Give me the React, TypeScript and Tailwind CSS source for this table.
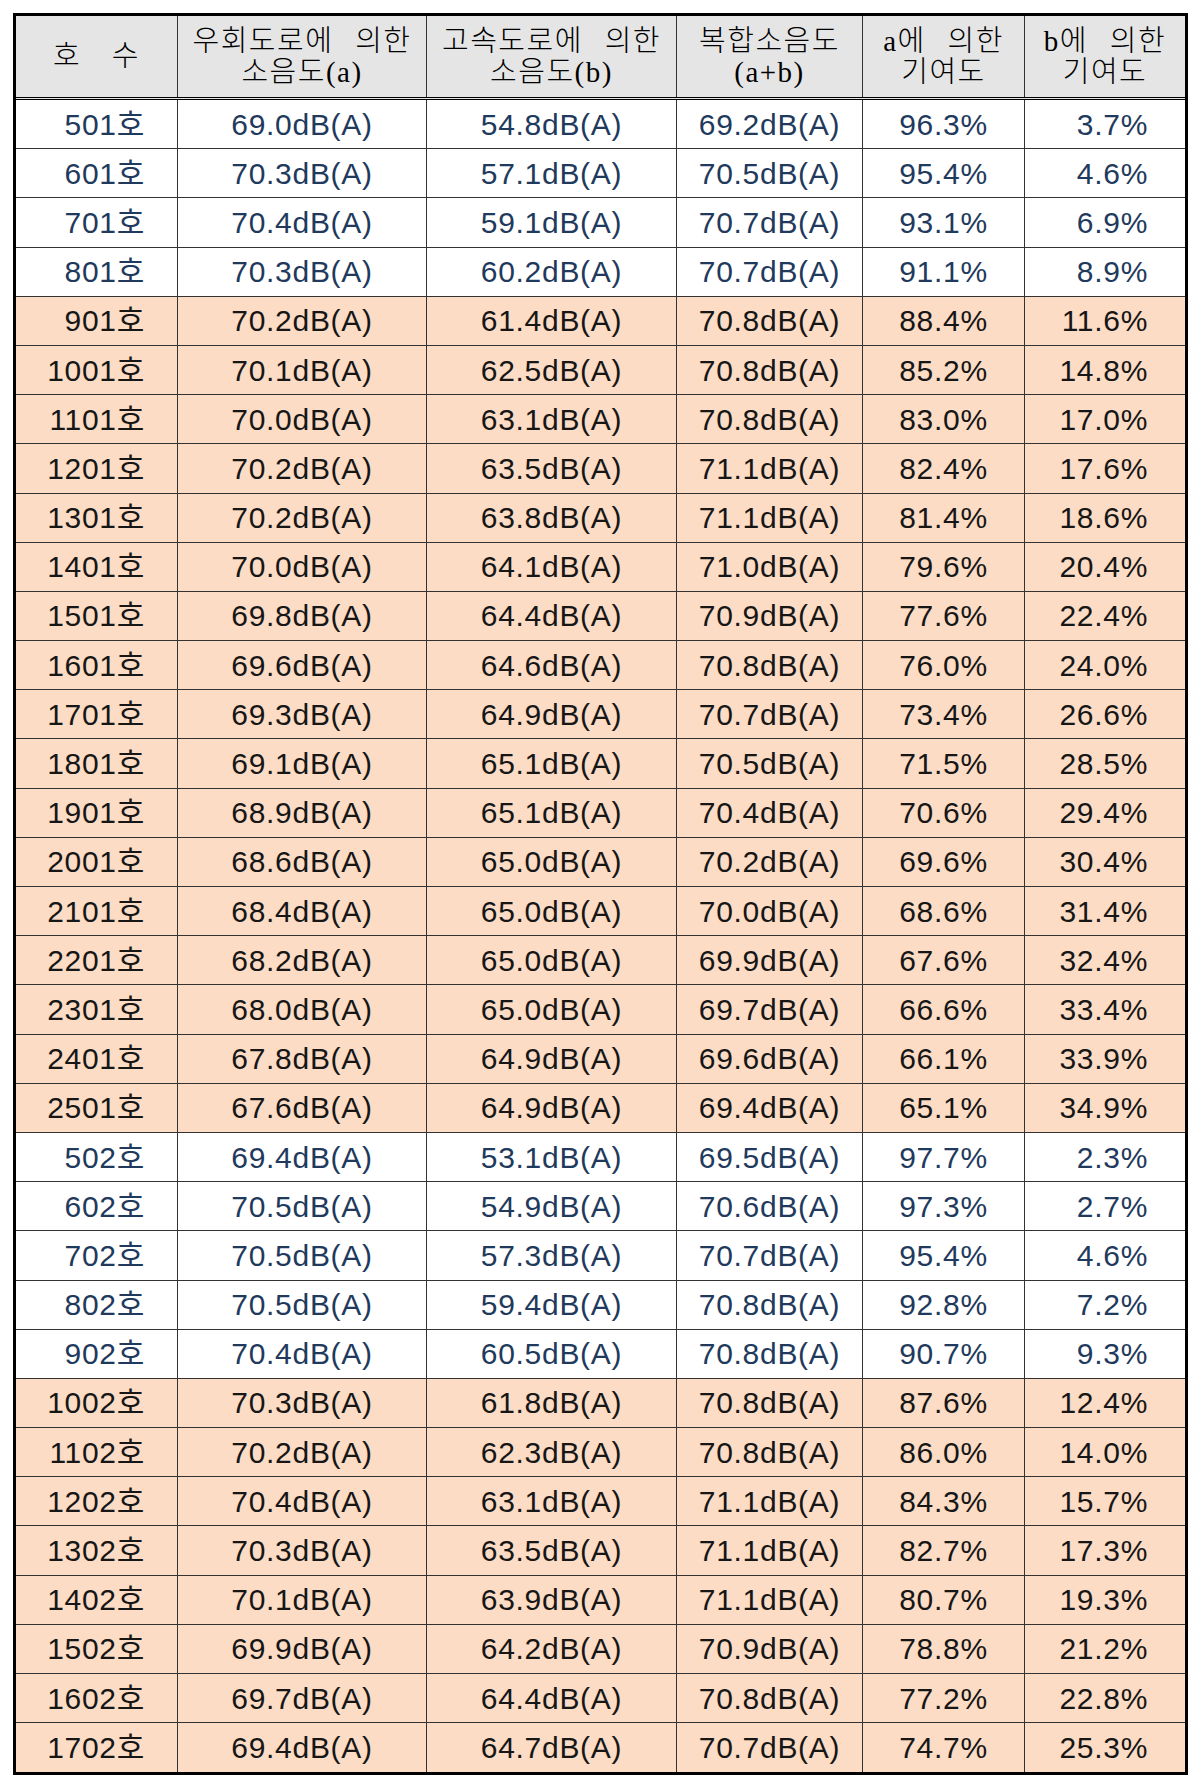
const rows: [string, string, string, string, string, string][] = [
  ["501호", "69.0", "54.8", "69.2", "96.3", "3.7"],
  ["601호", "70.3", "57.1", "70.5", "95.4", "4.6"],
  ["701호", "70.4", "59.1", "70.7", "93.1", "6.9"],
  ["801호", "70.3", "60.2", "70.7", "91.1", "8.9"],
  ["901호", "70.2", "61.4", "70.8", "88.4", "11.6"],
  ["1001호", "70.1", "62.5", "70.8", "85.2", "14.8"],
  ["1101호", "70.0", "63.1", "70.8", "83.0", "17.0"],
  ["1201호", "70.2", "63.5", "71.1", "82.4", "17.6"],
  ["1301호", "70.2", "63.8", "71.1", "81.4", "18.6"],
  ["1401호", "70.0", "64.1", "71.0", "79.6", "20.4"],
  ["1501호", "69.8", "64.4", "70.9", "77.6", "22.4"],
  ["1601호", "69.6", "64.6", "70.8", "76.0", "24.0"],
  ["1701호", "69.3", "64.9", "70.7", "73.4", "26.6"],
  ["1801호", "69.1", "65.1", "70.5", "71.5", "28.5"],
  ["1901호", "68.9", "65.1", "70.4", "70.6", "29.4"],
  ["2001호", "68.6", "65.0", "70.2", "69.6", "30.4"],
  ["2101호", "68.4", "65.0", "70.0", "68.6", "31.4"],
  ["2201호", "68.2", "65.0", "69.9", "67.6", "32.4"],
  ["2301호", "68.0", "65.0", "69.7", "66.6", "33.4"],
  ["2401호", "67.8", "64.9", "69.6", "66.1", "33.9"],
  ["2501호", "67.6", "64.9", "69.4", "65.1", "34.9"],
  ["502호", "69.4", "53.1", "69.5", "97.7", "2.3"],
  ["602호", "70.5", "54.9", "70.6", "97.3", "2.7"],
  ["702호", "70.5", "57.3", "70.7", "95.4", "4.6"],
  ["802호", "70.5", "59.4", "70.8", "92.8", "7.2"],
  ["902호", "70.4", "60.5", "70.8", "90.7", "9.3"],
  ["1002호", "70.3", "61.8", "70.8", "87.6", "12.4"],
  ["1102호", "70.2", "62.3", "70.8", "86.0", "14.0"],
  ["1202호", "70.4", "63.1", "71.1", "84.3", "15.7"],
  ["1302호", "70.3", "63.5", "71.1", "82.7", "17.3"],
  ["1402호", "70.1", "63.9", "71.1", "80.7", "19.3"],
  ["1502호", "69.9", "64.2", "70.9", "78.8", "21.2"],
  ["1602호", "69.7", "64.4", "70.8", "77.2", "22.8"],
  ["1702호", "69.4", "64.7", "70.7", "74.7", "25.3"],
]

const cols = "grid grid-cols-[162px_249px_250px_186px_162px_160px]"
const line = "border-r border-[#333]"

function HeadCell({ top, bottom, last }: { top: string; bottom?: string; last?: boolean }) {
  return (
    <div
      className={`flex flex-col items-center justify-center text-[29px] leading-[31px] tracking-[1.5px] text-black [word-spacing:13px] ${last ? "" : line}`}
    >
      <span>{top}</span>
      {bottom && <span>{bottom}</span>}
    </div>
  )
}

export default function App() {
  return (
    <div className="min-h-[1788px] bg-white pt-[13px] pl-[13px]">
      <div className="w-[1175px] border-[3px] border-black font-['Liberation_Sans','Noto_Sans_CJK_KR',sans-serif]">
        <div
          className={`${cols} h-[84px] border-b-[3px] border-double border-black bg-[#e5e5e5] font-['Liberation_Serif','Noto_Sans_CJK_KR',serif] font-light`}
        >
          <HeadCell top="호　수" />
          <HeadCell top="우회도로에 의한" bottom="소음도(a)" />
          <HeadCell top="고속도로에 의한" bottom="소음도(b)" />
          <HeadCell top="복합소음도" bottom="(a+b)" />
          <HeadCell top="a에 의한" bottom="기여도" />
          <HeadCell top="b에 의한" bottom="기여도" last />
        </div>
        {rows.map((r, i) => {
          const hot = Number(r[5]) > 10
          const isLast = i === rows.length - 1
          return (
            <div
              key={r[0]}
              className={`${cols} h-[49.2px] text-[30px] tracking-[0.7px] ${
                isLast ? "" : "border-b border-[#333]"
              } ${hot ? "bg-[#fcdcc5] text-[#161616]" : "bg-white text-[#1f3a5c]"}`}
            >
              <div className={`flex items-center justify-end pr-[32px] ${line}`}>{r[0]}</div>
              <div className={`flex items-center justify-center ${line}`}>{r[1]}dB(A)</div>
              <div className={`flex items-center justify-center ${line}`}>{r[2]}dB(A)</div>
              <div className={`flex items-center justify-center ${line}`}>{r[3]}dB(A)</div>
              <div className={`flex items-center justify-center ${line}`}>{r[4]}%</div>
              <div className="flex items-center justify-end pr-[37px]">{r[5]}%</div>
            </div>
          )
        })}
      </div>
    </div>
  )
}
